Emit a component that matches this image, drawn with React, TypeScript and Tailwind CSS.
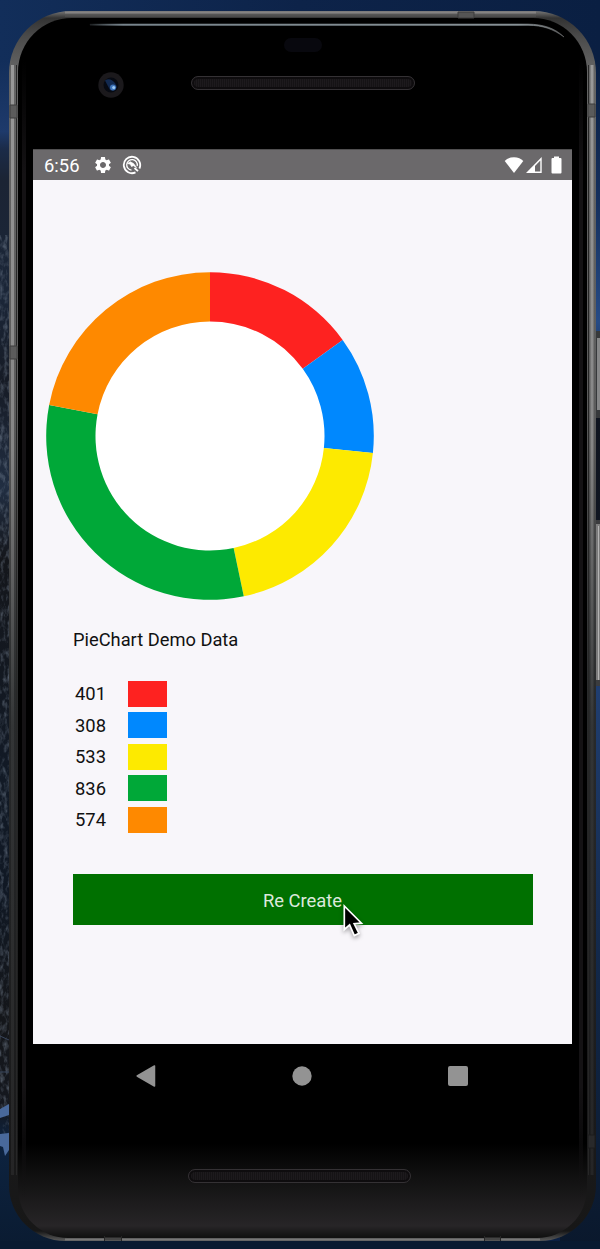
import React from "react";

const entries = [
  { value: 401, color: "#fe2220", end: 54.1 },
  { value: 308, color: "#0088fe", end: 96 },
  { value: 533, color: "#fdea00", end: 168.1 },
  { value: 836, color: "#00a838", end: 280.9 },
  { value: 574, color: "#fe8900", end: 360 },
];

function DonutChart() {
  const c = 164;
  const outer = 163.8;
  const inner = 114.5;
  const at = (radius: number, degrees: number) => {
    const a = (degrees * Math.PI) / 180;
    return `${c + radius * Math.sin(a)} ${c - radius * Math.cos(a)}`;
  };
  return (
    <svg className="block h-[328px] w-[328px]" viewBox="0 0 328 328">
      <circle cx={c} cy={c} r={inner + 1} fill="#fff" />
      {entries.map((e, i) => {
        const s = i === 0 ? 0 : entries[i - 1].end;
        const t = e.end;
        return (
          <path
            key={e.value}
            d={`M${at(outer, s)}A${outer} ${outer} 0 0 1 ${at(outer, t)}L${at(inner, t)}A${inner} ${inner} 0 0 0 ${at(inner, s)}Z`}
            fill={e.color}
          />
        );
      })}
    </svg>
  );
}

function Backdrop() {
  return (
    <svg className="absolute inset-0 h-[1249px] w-[600px]" viewBox="0 0 600 1249">
      <defs>
        <linearGradient id="sky" x1="0" x2="1" y1="0" y2="0">
          <stop offset="0" stopColor="#122e5a" />
          <stop offset="0.5" stopColor="#0d2349" />
          <stop offset="1" stopColor="#0a1f42" />
        </linearGradient>
        <linearGradient id="leftSide" x1="0" x2="0" y1="0" y2="1">
          <stop offset="0" stopColor="#122e5a" />
          <stop offset="0.06" stopColor="#1e3a6b" />
          <stop offset="0.075" stopColor="#1b2b48" />
          <stop offset="0.1" stopColor="#1b2434" />
          <stop offset="0.2" stopColor="#1b2638" />
          <stop offset="0.27" stopColor="#161b25" />
          <stop offset="0.36" stopColor="#212e42" />
          <stop offset="0.42" stopColor="#14161b" />
          <stop offset="0.6" stopColor="#121a26" />
          <stop offset="0.7" stopColor="#101824" />
          <stop offset="0.8" stopColor="#14161a" />
          <stop offset="0.88" stopColor="#15181f" />
          <stop offset="0.91" stopColor="#0d2340" />
          <stop offset="1" stopColor="#0a1b31" />
        </linearGradient>
        <linearGradient id="rightSide" x1="0" x2="0" y1="0" y2="1">
          <stop offset="0" stopColor="#0a1f42" />
          <stop offset="0.12" stopColor="#15305e" />
          <stop offset="0.22" stopColor="#264b86" />
          <stop offset="0.3" stopColor="#0f141f" />
          <stop offset="0.42" stopColor="#101622" />
          <stop offset="0.53" stopColor="#203e70" />
          <stop offset="0.75" stopColor="#13294b" />
          <stop offset="1" stopColor="#0a182c" />
        </linearGradient>
        <filter id="rock" x="0" y="0" width="1" height="1">
          <feTurbulence type="fractalNoise" baseFrequency="0.25 0.12" numOctaves="3" seed="4" />
          <feColorMatrix values="0 0 0 0 0.27  0 0 0 0 0.33  0 0 0 0 0.42  1.8 0 0 0 -0.8" />
        </filter>
      </defs>
      <rect width="600" height="1249" fill="url(#sky)" />
      <rect width="70" height="1189" y="60" fill="url(#leftSide)" />
      <rect x="560" y="60" width="40" height="1189" fill="url(#rightSide)" />
      <rect y="235" width="12" height="905" filter="url(#rock)" opacity="0.6" />
      <path d="M0 1109L9 1104V1115L0 1118ZM0 1134L9 1133V1150L5 1156L3 1147L0 1146Z" fill="#49699b" />
      <path d="M0 1036L9 1040M0 1072H9" stroke="#39465d" />
      <rect y="1241" width="600" height="8" fill="#091a31" />
      <rect x="595" y="331" width="5" height="87" fill="#37393b" />
      <rect x="597" y="338" width="3" height="72" fill="#858687" />
      <rect x="595" y="520" width="5" height="166" fill="#3b3c3e" />
      <rect x="595" y="524" width="5" height="156" fill="#7c7c7c" />
      <rect x="598" y="526" width="1" height="154" fill="#b4b4b4" />
    </svg>
  );
}

function FrameDetails() {
  return (
    <svg className="pointer-events-none absolute inset-0 h-[1249px] w-[600px]" viewBox="0 0 600 1249" fill="none">
      <defs>
        <linearGradient id="glint" x1="85" x2="566" y1="0" y2="0" gradientUnits="userSpaceOnUse">
          <stop offset="0" stopColor="#829099" stopOpacity="0" />
          <stop offset="0.08" stopColor="#829099" />
          <stop offset="0.9" stopColor="#939ea3" />
          <stop offset="1" stopColor="#88898a" stopOpacity="0.5" />
        </linearGradient>
        <linearGradient id="edge" x1="0" x2="0" y1="60" y2="1170" gradientUnits="userSpaceOnUse">
          <stop offset="0" stopColor="#999" />
          <stop offset="0.35" stopColor="#858585" />
          <stop offset="0.6" stopColor="#333536" />
          <stop offset="1" stopColor="#252526" />
        </linearGradient>
        <linearGradient id="innerEdge" x1="0" x2="0" y1="60" y2="1200" gradientUnits="userSpaceOnUse">
          <stop offset="0" stopColor="#141214" stopOpacity="0" />
          <stop offset="0.1" stopColor="#141214" />
          <stop offset="0.9" stopColor="#141214" />
          <stop offset="1" stopColor="#141214" stopOpacity="0" />
        </linearGradient>
      </defs>
      <path d="M90 24.2H528C543 24.2 555 28 564 37C553 29 543 25.4 528 25.2H90Z" fill="url(#glint)" stroke="url(#glint)" strokeWidth="0.8" />
      <path d="M65 12.5H536" stroke="#858383" strokeWidth="2" />
      <path d="M65 16H536" stroke="#555" />
      <rect x="11" y="65" width="3" height="1110" fill="url(#edge)" />
      <rect x="590.5" y="65" width="3" height="1110" fill="url(#edge)" />
      <path d="M16.500 65V1175M588.500 65V1175" stroke="#272727" />
      <rect x="22" y="60" width="4" height="1140" fill="url(#innerEdge)" />
      <rect x="579" y="60" width="4" height="1140" fill="url(#innerEdge)" />
      <path d="M10 105H17V118H10ZM10 346H17V359H10ZM588 104H595V117H588Z" fill="#5b5b5b" stroke="#3c3c3c" />
      <path d="M588 1135H595V1148H588Z" fill="#29292a" stroke="#1c1c1c" />
      <path d="M458 12H474V18H458Z" fill="#555" stroke="#3c3c3c" />
      <path d="M65 1239.500H540" stroke="#777" strokeWidth="2" />
      <path d="M104 1239H122M484 1239H501" stroke="#444" strokeWidth="3" />
      <path d="M104.5 1236V1241M121.5 1236V1241M484.5 1236V1241M500.5 1236V1241" stroke="#262626" />
    </svg>
  );
}

function Camera() {
  return (
    <svg className="h-[26px] w-[26px]" viewBox="0 0 26 26">
      <circle cx="13" cy="13" r="12.7" fill="#1b191c" />
      <circle cx="13" cy="13" r="7.5" fill="#070a12" />
      <path d="M7 8.500Q12 5 17 11L19 15Q17 20 12 18Z" fill="#12294f" />
      <circle cx="15" cy="15.500" r="3" fill="#3e73b9" />
      <circle cx="15.700" cy="15.500" r="1.500" fill="#9ccbf5" />
    </svg>
  );
}

function Grille({ className }: { className: string }) {
  return (
    <div
      className={`rounded-full border border-[#343134] bg-[#0c0a0c] bg-[repeating-linear-gradient(90deg,#1d1a1d_0px,#1d1a1d_1px,#151315_1px,#151315_2px)] shadow-[inset_0_0_0_2px_#0e0c0e] ${className}`}
    />
  );
}

function StatusBar() {
  return (
    <header className="flex h-[31px] items-center border-t border-[#504f50] bg-[#6b696b] pr-[10px] pl-[11px] text-white">
      <span className="w-[49px] pt-[2px] text-[18.4px] leading-none">6:56</span>
      <svg className="h-[20px] w-[20px]" viewBox="0 0 24 24" fill="currentColor">
        <path d="M19.140 12.940c.04-.3.060-.61.060-.940 0-.32-.02-.64-.07-.94l2.030-1.580c.18-.14.230-.41.120-.61l-1.920-3.320c-.12-.22-.37-.29-.59-.22l-2.390.96c-.5-.38-1.030-.7-1.620-.94l-.36-2.540c-.04-.24-.24-.41-.48-.41h-3.840c-.24 0-.43.17-.47.41l-.36 2.540c-.59.240-1.130.570-1.620.940l-2.390-.96c-.22-.08-.47 0-.59.220L2.740 8.870c-.12.210-.08.470.120.610l2.030 1.580c-.05.300-.09.630-.09.940s.02.640.07.940l-2.030 1.580c-.18.140-.23.410-.12.610l1.920 3.320c.12.220.370.290.590.220l2.390-.96c.5.380 1.030.700 1.620.940l.36 2.540c.05.240.240.410.480.410h3.840c.24 0 .44-.17.470-.41l.36-2.540c.59-.24 1.130-.56 1.620-.94l2.390.96c.22.080.470 0 .59-.22l1.920-3.320c.12-.22.070-.47-.12-.61l-2.010-1.580zM12 15.600c-1.980 0-3.600-1.620-3.600-3.600s1.620-3.600 3.600-3.600 3.600 1.620 3.600 3.600-1.620 3.600-3.600 3.600z" />
      </svg>
      <svg className="ml-[9px] h-[20px] w-[20px]" viewBox="0 0 20 20" fill="none" stroke="currentColor">
        <path d="M13.500 17.400A8.200 8.200 0 1 1 17.400 13.500" strokeWidth="1.800" />
        <path d="M9.500 15.200A5.300 5.300 0 1 1 15.200 11" strokeWidth="1.300" />
        <path d="M5.500 8.500L8.200 6.800L11.500 8.500L14.500 12.500L11.400 10.700L9.500 11.500L8.300 9.200Z" fill="currentColor" strokeWidth="0.700" />
        <path d="M12.500 13L16 16.200" strokeWidth="1.800" />
      </svg>
      <svg className="ml-auto h-[18px] w-[20px]" viewBox="0 0 20 18" fill="currentColor">
        <path d="M.7 5Q4 1.200 10 1.200T19.300 5L10 17Z" />
      </svg>
      <svg className="ml-[2px] h-[18px] w-[16px]" viewBox="0 0 16 18">
        <path d="M0 17L15.700 1V17Z" fill="currentColor" />
        <path d="M8.500 10.500L14.300 4.500V15.500H8.500Z" fill="#6b696b" />
        <path d="M8.500 9.500V16" stroke="#fff" strokeWidth="1" />
      </svg>
      <svg className="ml-[9px] h-[18px] w-[11px]" viewBox="0 0 11 18" fill="currentColor">
        <path d="M3 .500H8V2H9.500Q10.500 2 10.500 3V16.500Q10.500 17.500 9.500 17.500H1.500Q.5 17.500.5 16.500V3Q.5 2 1.500 2H3Z" />
      </svg>
    </header>
  );
}

function Cursor() {
  return (
    <svg className="absolute top-[28px] left-[266px] h-[40px] w-[28px] drop-shadow-[0_2px_2px_rgba(0,0,0,0.35)]" viewBox="0 0 28 40">
      <path d="M5.300 4V27.500L10.600 22.800L15.300 33.500L20 31.300L15.200 21.800L22.500 21.200Z" fill="#000" stroke="#fff" strokeWidth="1.700" />
    </svg>
  );
}

function NavBar() {
  return (
    <nav className="mr-[16px] ml-[14px] flex h-[64px] shrink-0 items-center justify-center gap-[136px]">
      <svg className="h-[22px] w-[20px]" viewBox="0 0 20 22">
        <path d="M1.200 11L18.500 1V21Z" fill="#939393" stroke="#939393" strokeLinejoin="round" strokeWidth="1.500" />
      </svg>
      <svg className="h-[20px] w-[20px]" viewBox="0 0 20 20">
        <circle cx="10" cy="10" r="9.700" fill="#939393" />
      </svg>
      <div className="h-[20px] w-[20px] rounded-[2px] bg-[#939393]" />
    </nav>
  );
}

export default function App() {
  return (
    <div className="relative h-[1249px] w-[600px] overflow-hidden bg-[#0d2349] pt-[11px] pl-[9px] font-[Roboto,sans-serif]">
      <Backdrop />
      <div className="relative h-[1230px] w-[587px] rounded-t-[62px] rounded-b-[56px] bg-[linear-gradient(180deg,#777_0px,#333_7px,#4a4a4a_25px,#656565_60px,#5c5c5c_400px,#292b2c_680px,#1a1a1b_1100px,#171717_1220px,#555_1229px)] px-[9px] pt-[7px] pb-[3px]">
        <div className="flex h-[1220px] flex-col rounded-t-[54px] rounded-b-[50px] bg-[linear-gradient(180deg,#000_0px,#000_1125px,#111_1160px,#272527_1208px,#111_1219px)]">
          <div className="flex h-[131px] shrink-0 flex-col">
            <div className="mt-[20px] h-[14px] w-[38px] self-center rounded-full bg-[#08080e]" />
            <div className="mt-[20px] flex items-center pl-[80px]">
              <Camera />
              <Grille className="mb-[4px] ml-[67px] h-[14px] w-[224px]" />
            </div>
          </div>
          <div className="mx-[15px] h-[895px] shrink-0 bg-[#f8f6fa]">
            <StatusBar />
            <main className="flex flex-col pt-[92px]">
              <div className="ml-[13px]">
                <DonutChart />
              </div>
              <h1 className="mt-[29px] ml-[40px] h-[22px] text-[18.3px] leading-[22px] text-[#111]">PieChart Demo Data</h1>
              <ul className="mt-[27px] ml-[42px] text-[18.4px] text-[#111]">
                {entries.map((e) => (
                  <li key={e.value} className="flex h-[31.5px] items-center">
                    <span className="w-[52.5px] pt-px leading-[22px]">{e.value}</span>
                    <span className="h-[26px] w-[39.5px]" style={{ backgroundColor: e.color }} />
                  </li>
                ))}
              </ul>
              <div className="relative mx-[39.5px] mt-[38.5px]">
                <button className="block h-[51px] w-full bg-[#007000] pt-[2px] text-[18.4px] text-[#dce9dc]">Re Create</button>
                <Cursor />
              </div>
            </main>
          </div>
          <NavBar />
          <Grille className="mt-[61px] ml-[170px] h-[14px] w-[223px] shrink-0" />
        </div>
      </div>
      <FrameDetails />
    </div>
  );
}
